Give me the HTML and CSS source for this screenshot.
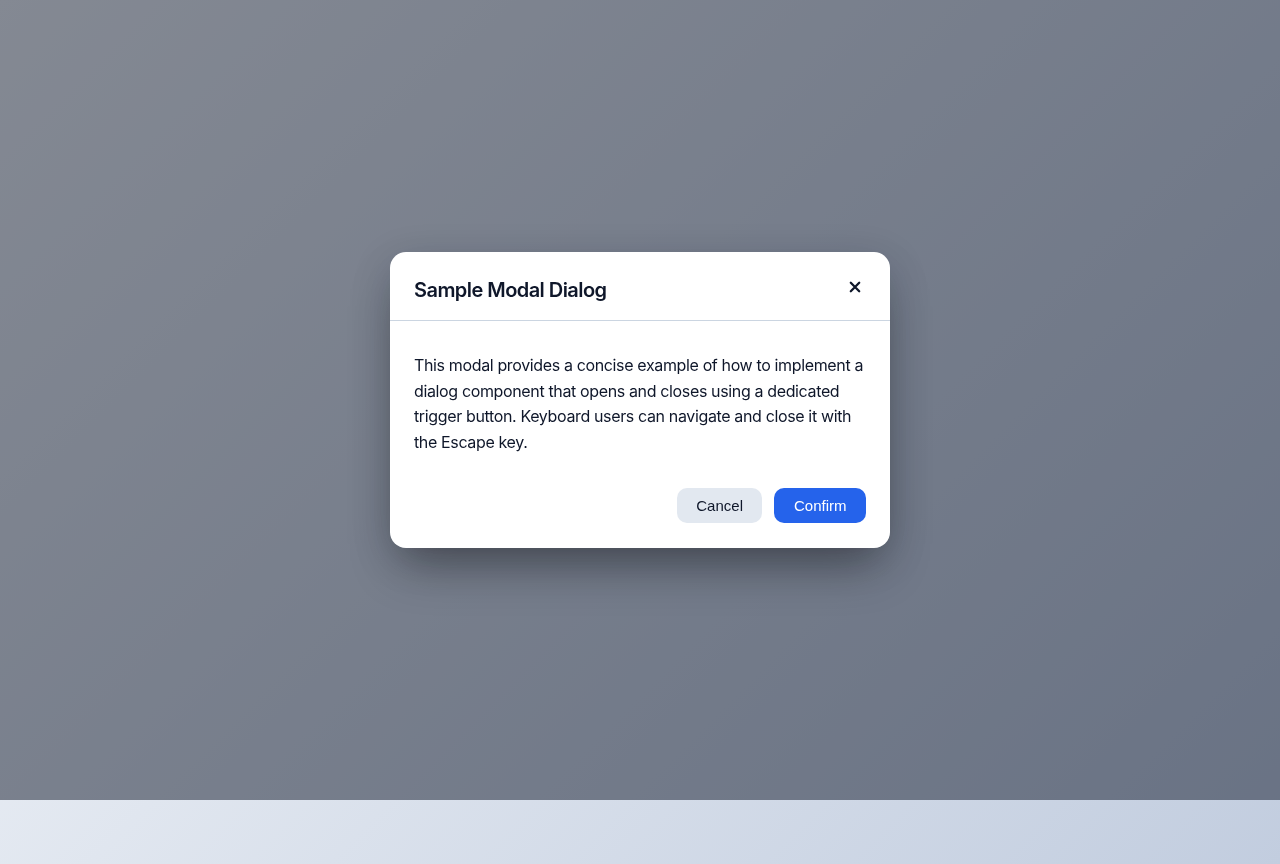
FILE: index.html
```html
<!DOCTYPE html>
<html>
<head>
    <title>Modal Dialog Demo</title>
    <link rel="stylesheet" href="styles.css">
</head>
<body>
    <main class="page">
        <button class="open-button" id="openButton">Open dialog</button>
    </main>

    <!-- Overlay with the dialog, shown open -->
    <div class="overlay" id="overlay">
        <div class="modal" role="dialog" aria-modal="true" aria-labelledby="modalTitle">
            <div class="modal-header">
                <h2 class="modal-title" id="modalTitle">Sample Modal Dialog</h2>
                <button class="close-button" id="closeButton" aria-label="Close">
                    <svg width="14" height="14" viewBox="0 0 14 14">
                        <path d="M2.8 2.8 L11.2 11.2 M11.2 2.8 L2.8 11.2" stroke="#0f172a" stroke-width="2.3" stroke-linecap="round"/>
                    </svg>
                </button>
            </div>
            <div class="modal-body">
                <p>This modal provides a concise example of how to implement a dialog component that opens and closes using a dedicated trigger button. Keyboard users can navigate and close it with the Escape key.</p>
            </div>
            <div class="modal-footer">
                <button class="btn btn-secondary" id="cancelButton">Cancel</button>
                <button class="btn btn-primary" id="confirmButton">Confirm</button>
            </div>
        </div>
    </div>
</body>
</html>
```
FILE: styles.css
```css
/* Page background */
body {
    margin: 0;
    padding: 0;
    min-height: 864px;
    font-family: Inter, "Noto Sans", sans-serif;
    background: linear-gradient(135deg, #f8fafc, #c2cddf);
    color: #0f172a;
}

.page {
    min-height: 864px;
}

.open-button {
    display: none;
}

.overlay {
    position: fixed;
    top: 0;
    left: 0;
    width: 100%;
    height: 800px;
    background-color: rgba(15, 23, 42, 0.5);
    display: flex;
    justify-content: center;
    align-items: center;
}

.modal {
    width: 500px;
    background-color: #fff;
    border-radius: 16px;
    box-shadow: 0 25px 50px -12px rgba(0, 0, 0, 0.4), 0 10px 40px rgba(15, 23, 42, 0.15);
    overflow: hidden;
}

.modal-header {
    display: flex;
    justify-content: space-between;
    align-items: center;
    padding: 24px 19px 16px 24px;
    border-bottom: 1px solid #cbd5e1;
}

.modal-title {
    margin: 0;
    font-size: 20px;
    line-height: 28px;
    font-weight: 600;
    letter-spacing: -0.55px;
    color: #0f172a;
}

.close-button {
    width: 32px;
    height: 32px;
    margin-top: -6px;
    border: none;
    background: none;
    padding: 0;
    display: flex;
    justify-content: center;
    align-items: center;
    cursor: pointer;
}

.modal-body {
    padding: 32px 24px 0;
}

.modal-body p {
    margin: 0;
    font-size: 16px;
    line-height: 25.5px;
    letter-spacing: -0.36px;
    color: #0f172a;
}

.modal-footer {
    display: flex;
    justify-content: flex-end;
    gap: 12px;
    padding: 33px 24px 25px;
}

.btn {
    height: 35px;
    padding: 0 19.5px;
    border: none;
    border-radius: 10px;
    font-family: "Liberation Sans", Arial, sans-serif;
    font-size: 15px;
    cursor: pointer;
}

.btn-secondary {
    background-color: #e2e8f0;
    color: #0f172a;
}

.btn-primary {
    background-color: #2563eb;
    color: #fff;
}
```
